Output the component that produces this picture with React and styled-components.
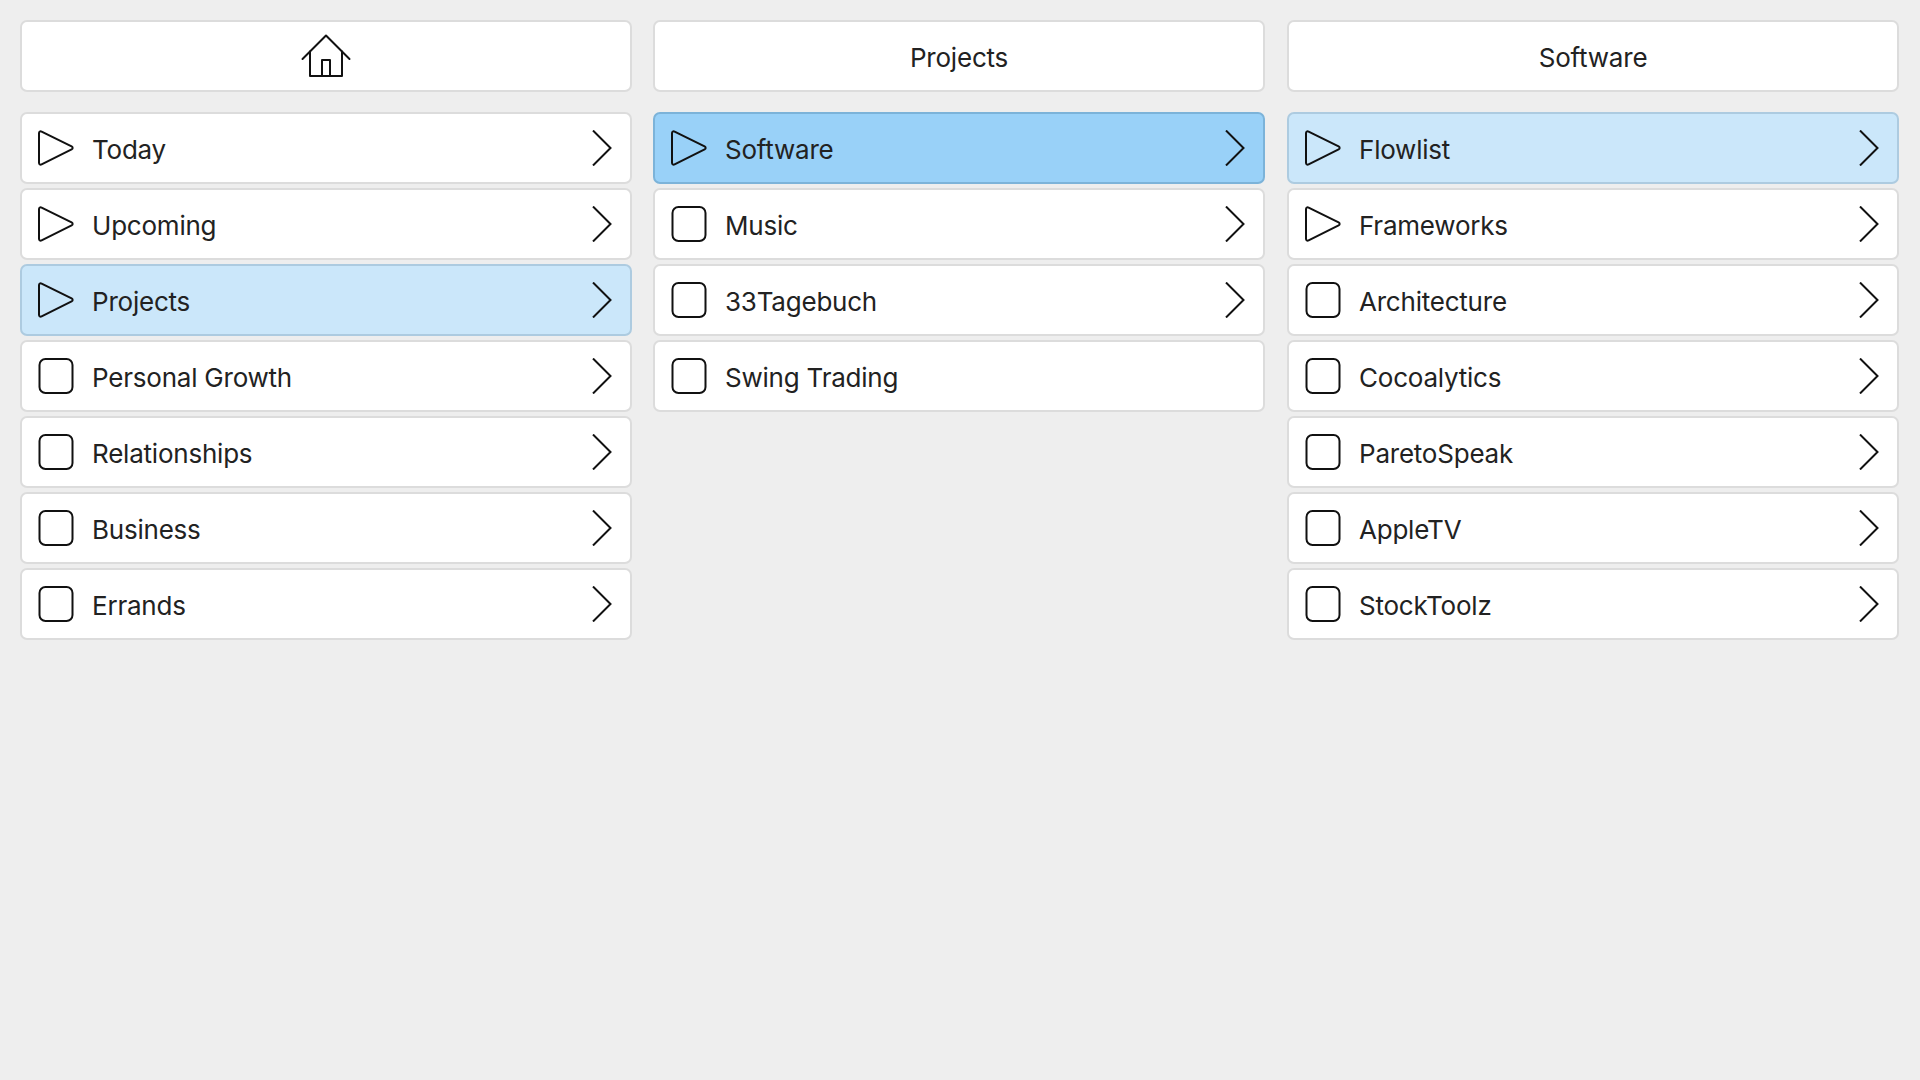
import React from 'react';
import styled, { createGlobalStyle } from 'styled-components';

const GlobalStyle = createGlobalStyle`
  html, body {
    margin: 0;
    height: 100%;
    background-color: #eeeeee;
  }
  body {
    font-family: Inter, "Noto Sans", "Liberation Sans", sans-serif;
    color: #222222;
  }
`;

const Page = styled.div`
  display: grid;
  grid-template-columns: 612px 612px 613px;
  column-gap: 21px;
  padding: 20px;
`;

const Column = styled.section`
  display: flex;
  flex-direction: column;

  &:last-child {
    margin-left: 1px;
  }
`;

const Header = styled.header`
  box-sizing: border-box;
  height: 72px;
  margin-bottom: 20px;
  display: flex;
  align-items: center;
  justify-content: center;
  background-color: #fff;
  border: 2px solid #dcdcdc;
  border-radius: 7px;
`;

const HeaderTitle = styled.span`
  font-size: 26px;
  letter-spacing: -0.2px;
  line-height: 1;
  position: relative;
  top: 2px;
`;

const List = styled.ul`
  list-style: none;
  margin: 0;
  padding: 0;
  display: flex;
  flex-direction: column;
  gap: 4px;
`;

const tones = {
  none: { bg: '#ffffff', border: '#dcdcdc' },
  active: { bg: '#cbe7fa', border: '#adcbe0' },
  current: { bg: '#99d1f8', border: '#7cb3d9' },
};

const Row = styled.li`
  box-sizing: border-box;
  height: 72px;
  padding: 0 18px 0 16px;
  display: flex;
  align-items: center;
  background-color: ${(props) => tones[props.$tone].bg};
  border: 2px solid ${(props) => tones[props.$tone].border};
  border-radius: 7px;
`;

const Label = styled.span`
  flex-grow: 1;
  margin-left: 18px;
  font-size: 26px;
  letter-spacing: -0.22px;
  line-height: 1;
  position: relative;
  top: 2px;
`;

const Glyph = styled.svg`
  display: block;
  flex-shrink: 0;
  fill: none;
  stroke: #111;
`;

const HomeIcon = () => (
  <Glyph width="50" height="44" viewBox="0 0 50 44" strokeWidth="2" strokeLinecap="round" strokeLinejoin="round">
    <path d="M1.5 25 L25 1.5 L48.5 25" />
    <path d="M9 17.5 V42 H41 V17.5" />
    <path d="M21 42 V26 H29 V42" />
  </Glyph>
);

const PlayIcon = () => (
  <Glyph width="36" height="36" viewBox="0 0 36 36" strokeWidth="2" strokeLinejoin="round">
    <path d="M1 3.2 C1 1.6 2.2 .9 3.6 1.6 L33.6 16.4 C35 17.2 35 18.6 33.6 19.4 L3.6 34.4 C2.2 35.1 1 34.4 1 32.8 Z" />
  </Glyph>
);

const BoxIcon = () => (
  <Glyph width="36" height="36" viewBox="0 0 36 36" strokeWidth="2">
    <rect x="1.5" y="1" width="33" height="34" rx="6" />
  </Glyph>
);

const ChevronIcon = () => (
  <Glyph width="20" height="36" viewBox="0 0 20 36" strokeWidth="2">
    <path d="M1 .5 L18.5 18 L1 35.5" />
  </Glyph>
);

const columns = [
  {
    title: <HomeIcon />,
    items: [
      { name: 'Today', play: true, next: true },
      { name: 'Upcoming', play: true, next: true },
      { name: 'Projects', play: true, next: true, tone: 'active' },
      { name: 'Personal Growth', next: true },
      { name: 'Relationships', next: true },
      { name: 'Business', next: true },
      { name: 'Errands', next: true },
    ],
  },
  {
    title: <HeaderTitle>Projects</HeaderTitle>,
    items: [
      { name: 'Software', play: true, next: true, tone: 'current' },
      { name: 'Music', next: true },
      { name: '33Tagebuch', next: true },
      { name: 'Swing Trading' },
    ],
  },
  {
    title: <HeaderTitle>Software</HeaderTitle>,
    items: [
      { name: 'Flowlist', play: true, next: true, tone: 'active' },
      { name: 'Frameworks', play: true, next: true },
      { name: 'Architecture', next: true },
      { name: 'Cocoalytics', next: true },
      { name: 'ParetoSpeak', next: true },
      { name: 'AppleTV', next: true },
      { name: 'StockToolz', next: true },
    ],
  },
];

const App = () => (
  <>
    <GlobalStyle />
    <Page>
      {columns.map((column, i) => (
        <Column key={i}>
          <Header>{column.title}</Header>
          <List>
            {column.items.map((item) => (
              <Row key={item.name} $tone={item.tone || 'none'}>
                {item.play ? <PlayIcon /> : <BoxIcon />}
                <Label>{item.name}</Label>
                {item.next && <ChevronIcon />}
              </Row>
            ))}
          </List>
        </Column>
      ))}
    </Page>
  </>
);

export default App;
